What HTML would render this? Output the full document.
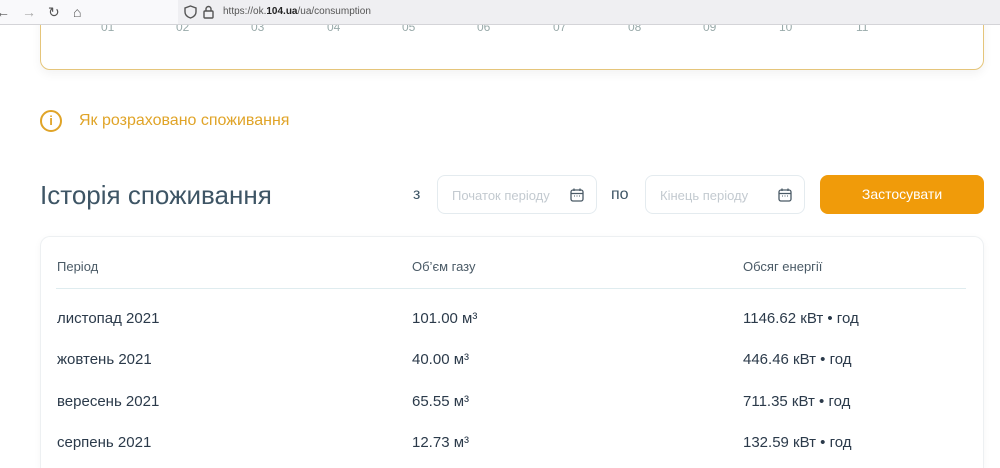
<!DOCTYPE html>
<html><head><meta charset="utf-8"><style>
*{margin:0;padding:0;box-sizing:border-box}
html,body{width:1000px;height:468px;overflow:hidden}
body{background:#fff;font-family:"Liberation Sans","DejaVu Sans",sans-serif;position:relative;color:#2b3a4a}
.bar{position:absolute;left:0;top:0;width:1000px;height:25px;background:#f9f9fb;border-bottom:1px solid #d4d4d8;z-index:5}
.url{position:absolute;left:178px;top:0;width:822px;height:24px;background:#efeff2}
.url span.u{position:absolute;left:45px;top:6px;font-size:10px;color:#555}
.url b{color:#222}
.ic{position:absolute;top:4px;color:#555;font-size:14px}
.card{position:absolute;left:40px;top:-20px;width:944px;height:90px;border:1px solid #e5c57a;border-radius:10px;box-shadow:0 4px 10px rgba(0,0,0,.05)}
.mon{position:absolute;top:20px;font-size:12px;color:#9aa}
.info{position:absolute;left:40px;top:110px;width:22px;height:22px;border:2px solid #e0a428;border-radius:50%;color:#e0a428;font-size:13px;font-weight:bold;text-align:center;line-height:18px}
.link{position:absolute;left:79px;top:112px;font-size:16px;color:#e0a428}
h1{position:absolute;left:40px;top:180px;font-size:26px;font-weight:normal;color:#3e5565}
.lbl{position:absolute;top:186px;font-size:16px;color:#3e5565}
.inp{position:absolute;top:175px;width:160px;height:39px;border:1px solid #e4ebef;border-radius:8px}
.inp span{position:absolute;left:14px;top:12px;font-size:13px;color:#c3cad0}
.inp svg{position:absolute;right:12px;top:12px}
.btn{position:absolute;left:820px;top:175px;width:164px;height:39px;background:#f09b0a;border-radius:8px;color:#fff;font-size:14px;text-align:center;line-height:39px}
.tbl{position:absolute;left:40px;top:236px;width:944px;height:232px;border:1px solid #edf0f2;border-bottom:none;border-radius:10px 10px 0 0;box-shadow:0 2px 8px rgba(0,0,0,.04)}
.hr{position:absolute;left:56px;top:288px;width:910px;height:1px;background:#dfecef}
.t{position:absolute;font-size:15px;color:#2b3a4a}
.h{position:absolute;top:259px;font-size:13px;color:#4a5a66}
</style></head><body>
<div class="card"></div>
<div class="mon" style="left:101px">01</div><div class="mon" style="left:176px">02</div><div class="mon" style="left:251px">03</div><div class="mon" style="left:327px">04</div><div class="mon" style="left:402px">05</div><div class="mon" style="left:477px">06</div><div class="mon" style="left:553px">07</div><div class="mon" style="left:628px">08</div><div class="mon" style="left:703px">09</div><div class="mon" style="left:779px">10</div><div class="mon" style="left:856px">11</div>
<div class="bar">
<span class="ic" style="left:-4px">←</span><span class="ic" style="left:22px;color:#aaa">→</span><span class="ic" style="left:48px">↻</span><span class="ic" style="left:73px">⌂</span>
<div class="url">
<svg style="position:absolute;left:6px;top:5px" width="13" height="14" viewBox="0 0 13 14"><path d="M6.5 1 L12 3 V7 C12 10 9.5 12 6.5 13 C3.5 12 1 10 1 7 V3 Z" fill="none" stroke="#555" stroke-width="1.4"/></svg>
<svg style="position:absolute;left:25px;top:5px" width="11" height="14" viewBox="0 0 11 14"><path d="M3 6 V4 A2.5 2.5 0 0 1 8 4 V6" fill="none" stroke="#555" stroke-width="1.4"/><rect x="1" y="6" width="9" height="7" rx="1" fill="none" stroke="#555" stroke-width="1.4"/></svg>
<span class="u">https://ok.<b>104.ua</b>/ua/consumption</span></div>
</div>
<div class="info">i</div>
<div class="link">Як розраховано споживання</div>
<h1>Історія споживання</h1>
<div class="lbl" style="left:413px">з</div>
<div class="inp" style="left:437px"><span>Початок періоду</span><svg width="14" height="14" viewBox="0 0 14 14"><rect x="1" y="2" width="12" height="11" rx="2" fill="none" stroke="#4a5a66" stroke-width="1.3"/><path d="M1 5.5H13M4 0.5V3M10 0.5V3" stroke="#4a5a66" stroke-width="1.3"/><path d="M4 8h1M6.5 8h1M9 8h1" stroke="#4a5a66"/></svg></div>
<div class="lbl" style="left:611px">по</div>
<div class="inp" style="left:645px"><span>Кінець періоду</span><svg width="14" height="14" viewBox="0 0 14 14"><rect x="1" y="2" width="12" height="11" rx="2" fill="none" stroke="#4a5a66" stroke-width="1.3"/><path d="M1 5.5H13M4 0.5V3M10 0.5V3" stroke="#4a5a66" stroke-width="1.3"/><path d="M4 8h1M6.5 8h1M9 8h1" stroke="#4a5a66"/></svg></div>
<div class="btn">Застосувати</div>
<div class="tbl"></div>
<div class="h" style="left:57px">Період</div><div class="h" style="left:412px">Об’єм газу</div><div class="h" style="left:743px">Обсяг енергії</div>
<div class="hr"></div>
<div class="t" style="left:57px;top:310px">листопад 2021</div><div class="t" style="left:412px;top:310px">101.00 м³</div><div class="t" style="left:743px;top:310px">1146.62 кВт • год</div>
<div class="t" style="left:57px;top:351px">жовтень 2021</div><div class="t" style="left:412px;top:351px">40.00 м³</div><div class="t" style="left:743px;top:351px">446.46 кВт • год</div>
<div class="t" style="left:57px;top:393px">вересень 2021</div><div class="t" style="left:412px;top:393px">65.55 м³</div><div class="t" style="left:743px;top:393px">711.35 кВт • год</div>
<div class="t" style="left:57px;top:434px">серпень 2021</div><div class="t" style="left:412px;top:434px">12.73 м³</div><div class="t" style="left:743px;top:434px">132.59 кВт • год</div>
</body></html>
